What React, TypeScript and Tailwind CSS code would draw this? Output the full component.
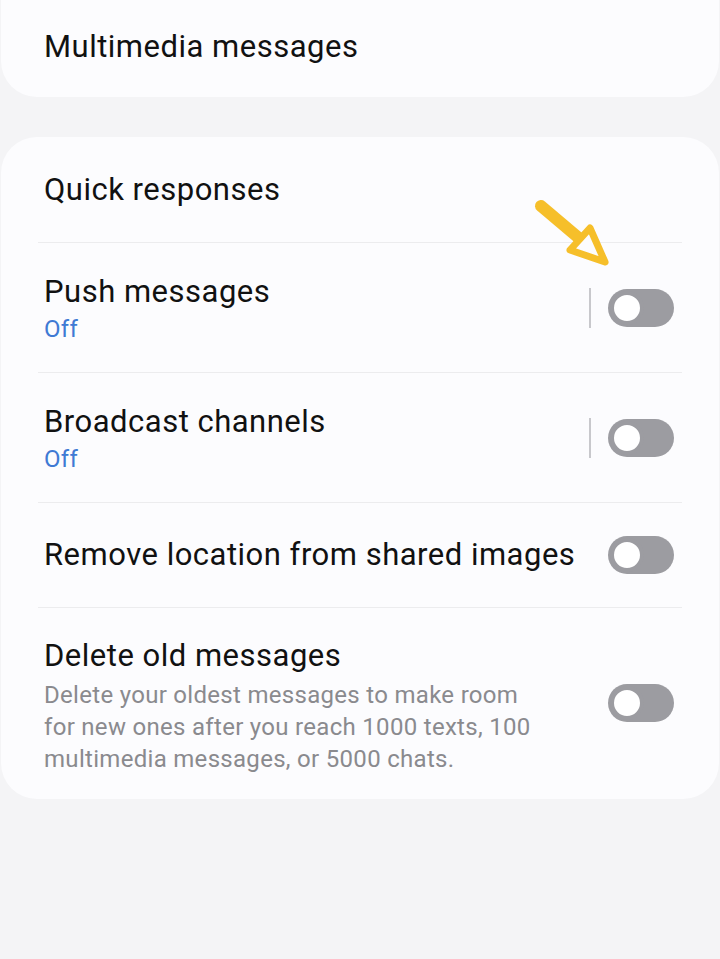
function Toggle({ className = '' }: { className?: string }) {
  return (
    <div className={`relative h-[38px] w-[66px] shrink-0 rounded-full bg-[#9c9ca1] ${className}`}>
      <div className="absolute left-[2px] top-[2px] h-[34px] w-[34px] rounded-full border-[4px] border-[#9c9ca1] bg-white" />
    </div>
  );
}

function Divider() {
  return <div className="mx-[37px] h-px bg-[#ececee]" />;
}

function Arrow() {
  return (
    <svg className="absolute left-[530px] top-[195px]" width="90" height="80" viewBox="0 0 90 80" fill="none">
      <path d="M11 11 L50 44" stroke="#f6bf2a" strokeWidth="12" strokeLinecap="round" />
      <path d="M60 33 L75 67 L40 55 Z" stroke="#f6bf2a" strokeWidth="7" strokeLinejoin="round" fill="#fcfcfe" />
    </svg>
  );
}

const title = 'text-[31px] leading-[36px] tracking-[0.5px]';
const sub = 'text-[24px] leading-[32px] tracking-[0.3px]';

export default function App() {
  return (
    <div
      className="relative min-h-[959px] w-[720px] bg-[#f4f4f6] text-[#111111]"
      style={{ fontFamily: 'Roboto, "Noto Sans", sans-serif' }}
    >
      <div className="mx-[1px] flex h-[97px] items-end rounded-b-[36px] bg-[#fcfcfe] pb-[32px] pl-[43px] pr-[45px]">
        <span className={title}>Multimedia messages</span>
      </div>

      <div className="mx-[1px] mt-[40px] rounded-[36px] bg-[#fcfcfe] pb-[24px]">
        <div className="flex h-[105px] items-center pl-[43px] pr-[45px] pt-[1px]">
          <span className={title}>Quick responses</span>
        </div>
        <Divider />

        <div className="flex h-[129px] items-center pl-[43px] pr-[45px]">
          <div className="flex flex-1 flex-col pt-[4px]">
            <span className={title}>Push messages</span>
            <span className={`mt-[3px] ${sub} text-[#3f7ad4]`}>Off</span>
          </div>
          <div className="mr-[17px] h-[40px] w-[2px] bg-[#c8c8cc]" />
          <Toggle />
        </div>
        <Divider />

        <div className="flex h-[129px] items-center pl-[43px] pr-[45px]">
          <div className="flex flex-1 flex-col pt-[4px]">
            <span className={title}>Broadcast channels</span>
            <span className={`mt-[3px] ${sub} text-[#3f7ad4]`}>Off</span>
          </div>
          <div className="mr-[17px] h-[40px] w-[2px] bg-[#c8c8cc]" />
          <Toggle />
        </div>
        <Divider />

        <div className="flex h-[104px] items-center pl-[43px] pr-[45px]">
          <span className={`flex-1 ${title}`}>Remove location from shared images</span>
          <Toggle />
        </div>
        <Divider />

        <div className="flex items-center pl-[43px] pr-[45px] pt-[30px]">
          <div className="flex flex-1 flex-col">
            <span className={title}>Delete old messages</span>
            <span className={`mt-[5px] w-[500px] ${sub} text-[#8a8a8e]`}>
              Delete your oldest messages to make room for new ones after you reach 1000 texts, 100 multimedia
              messages, or 5000 chats.
            </span>
          </div>
          <Toggle className="mb-[8px]" />
        </div>
      </div>

      <Arrow />
    </div>
  );
}
